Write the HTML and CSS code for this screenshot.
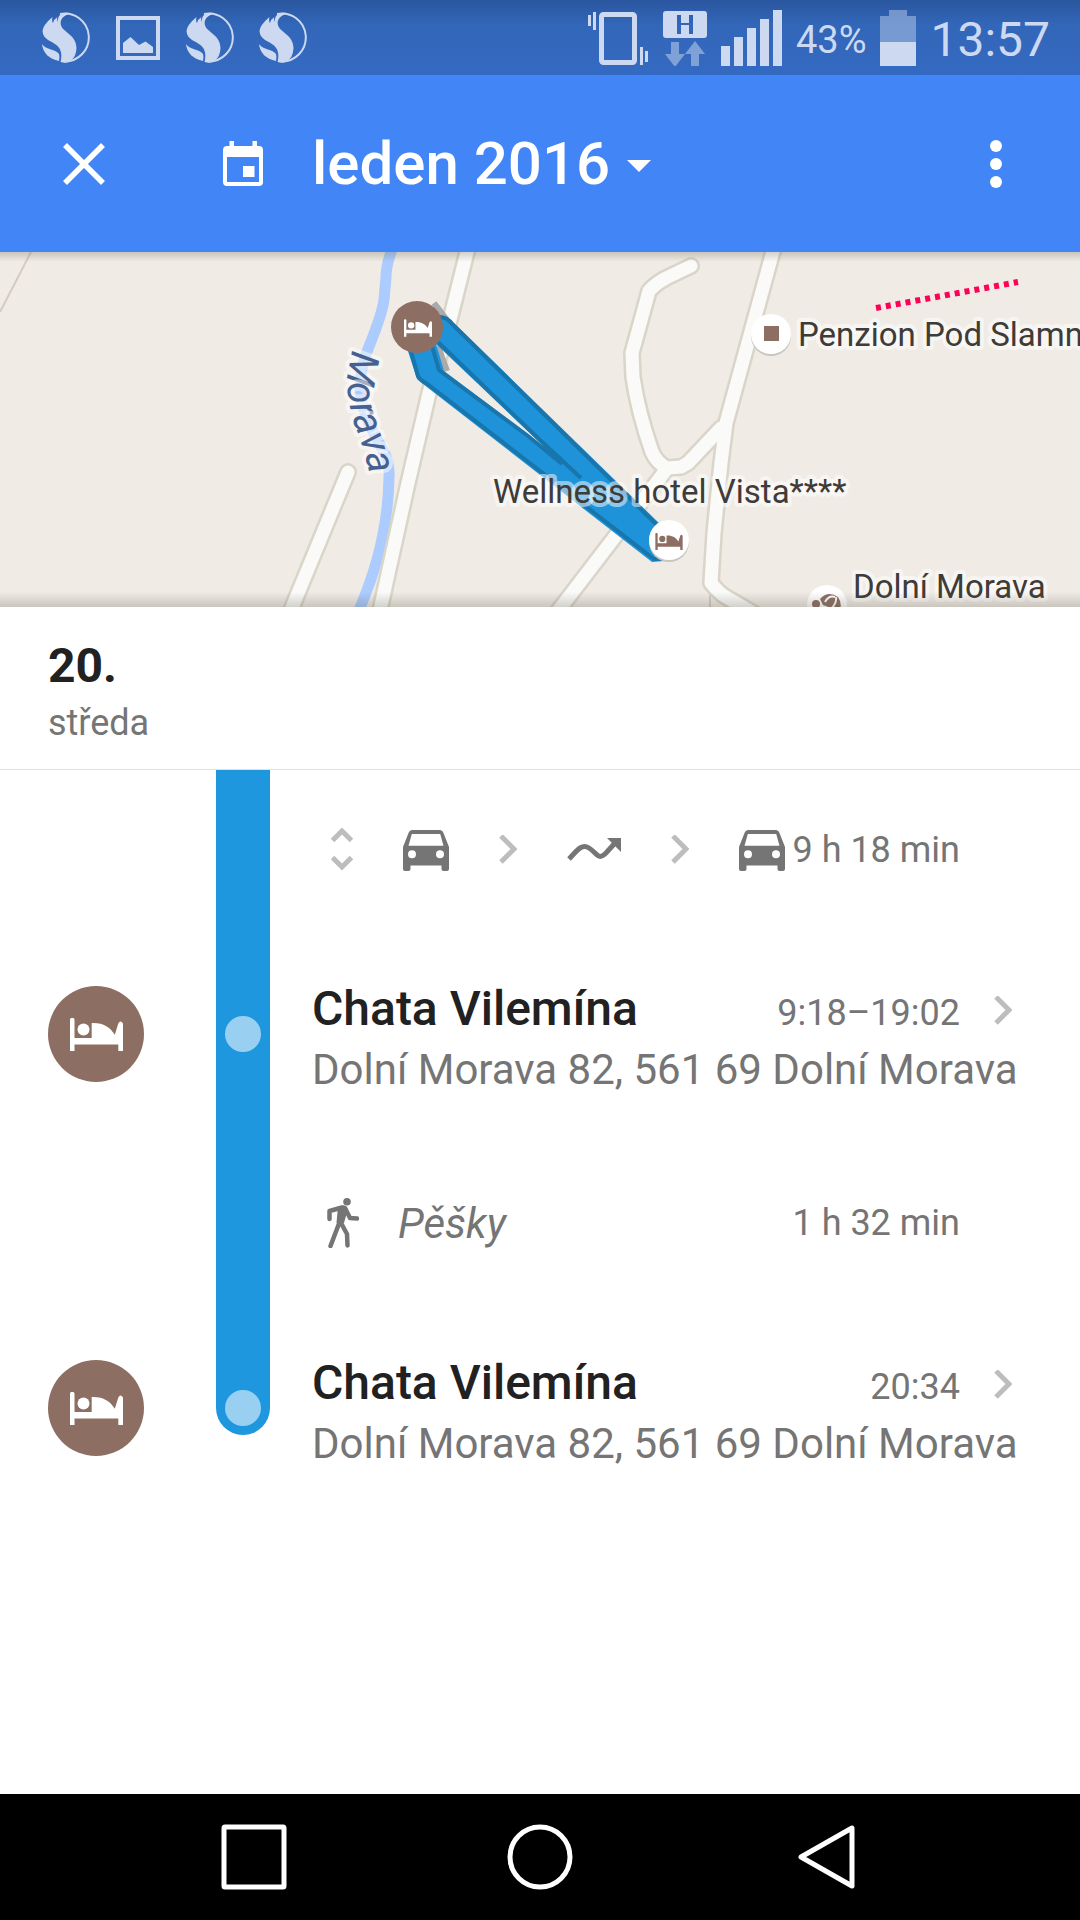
FILE: index.html
```html
<!DOCTYPE html>
<html lang="cs">
<head>
<meta charset="utf-8">
<meta name="viewport" content="width=device-width, initial-scale=1">
<title>leden 2016</title>
<link rel="stylesheet" href="styles.css">
</head>
<body>
<svg class="defs" aria-hidden="true">
  <symbol id="bed" viewBox="0 0 53 33">
    <path d="M0 2a2 2 0 0 1 4.500 0V20H21.700V5C33 4.500 40 9 44.800 16.700L48.300 5.500Q50.500 1.500 53 5.500V33H48.300V26.500H4.500V33H0z"/>
    <circle cx="13.500" cy="11.500" r="6"/>
  </symbol>
  <symbol id="car" viewBox="0 0 46 41">
    <path fill-rule="evenodd" d="M9 0H37Q39.500 0 40.300 2.500L46 17V39Q46 41 44 41H40.500Q38.500 41 38.500 39V35.500H7.500V39Q7.500 41 5.500 41H2Q0 41 0 39V17L5.700 2.500Q6.500 0 9 0zM8.800 4L5.500 15.800H40.500L37.200 4zM9 20.300a4 4 0 1 0 0 8a4 4 0 1 0 0-8zM37 20.300a4 4 0 1 0 0 8a4 4 0 1 0 0-8z"/>
  </symbol>
  <symbol id="chevron" viewBox="0 0 18 30">
    <path d="M2 1L15 14L2 27" fill="none" stroke="currentColor" stroke-width="5"/>
  </symbol>
  <symbol id="dragon" viewBox="0 0 50 51">
    <path d="M18 2A24 24 0 1 1 22 49.500" fill="none" stroke="currentColor" stroke-width="2"/>
    <path d="M27 1C23 0 19 1 17 4Q15.500 7 15.500 10Q14.500 7 15.500 5Q12 7 11 11Q9.500 9 10.500 5Q1 13 .5 19C1 28 10 29 15 33.500C20 38 20 44 18.500 50Q23 51.500 27 50C32 47 34 43 34.500 36C34 24 25 22 20 15.500C16.500 10 20 4 27 2z"/>
    <path d="M0 32C4 38 14 37 17 42Q18 45 17 49C7 47 1 41 0 32z"/>
  </symbol>
</svg>

<header class="status">
  <div class="status-group status-left">
    <svg width="50" height="51"><use href="#dragon"/></svg>
    <svg width="48" height="44" viewBox="-1 0 48 44"><path d="M2 2H42V42H2z" fill="none" stroke="currentColor" stroke-width="4"/><path d="M7 37V27L14.500 21L23 29L29.500 25.500L37 31V37z"/></svg>
    <svg width="50" height="51"><use href="#dragon"/></svg>
    <svg width="50" height="51"><use href="#dragon"/></svg>
  </div>
  <div class="status-group status-right">
    <svg width="61" height="56" viewBox="0 0 61 56"><rect x="13.500" y="4.500" width="33" height="48" rx="2" fill="none" stroke="currentColor" stroke-width="5"/><path d="M0 5h3v11H0zM5 2h3v18H5zM52 37h3v18h-3zM57 41h3v11h-3z"/></svg>
    <svg width="44" height="56" viewBox="0 0 44 56"><path fill-rule="evenodd" d="M3 1H41Q44 1 44 4V25Q44 28 41 28H3Q0 28 0 25V4Q0 1 3 1zM14 5V24H18V15H26V24H30V5H26V13H18V5z"/><path opacity=".5" d="M8 32h8v12h6L12 57L2 44h6zM32 31L42 44H36V56H28V44H22z"/></svg>
    <svg width="61" height="56" viewBox="0 0 61 56"><path d="M0 36h9v20H0zM13 27h9v29h-9zM26 18h9v38h-9zM39 9h9v47h-9zM52 0h9v56h-9z"/></svg>
    <span class="battery-text">43%</span>
    <svg width="36" height="56" viewBox="0 0 36 56"><path opacity=".45" d="M9 0H27V6H36V32H0V6H9z"/><path d="M0 32H36V56H0z"/></svg>
    <time class="clock">13:57</time>
  </div>
</header>

<nav class="appbar">
  <button class="icon-button" type="button" aria-label="Zavřít"><svg width="42" height="42" viewBox="0 0 42 42"><path d="M2 2L40 40M40 2L2 40" stroke="currentColor" stroke-width="5.500"/></svg></button>
  <button class="month" type="button">
    <svg class="calendar" width="40" height="45" viewBox="0 0 40 45"><path fill-rule="evenodd" d="M6.500 0H11V5H29.500V0H34V5H36Q40 5 40 9V41Q40 45 36 45H4Q0 45 0 41V9Q0 5 4 5H6.500zM4 16V41H36V16zM20 25H31.500V36H20z"/></svg>
    <span>leden 2016</span>
    <svg class="caret" width="24" height="12" viewBox="0 0 24 12"><path d="M0 0H24L12 12z"/></svg>
  </button>
  <button class="icon-button more" type="button" aria-label="Další možnosti"><svg width="12" height="48" viewBox="0 0 12 48"><circle cx="6" cy="6" r="6"/><circle cx="6" cy="24" r="6"/><circle cx="6" cy="42" r="6"/></svg></button>
</nav>

<section class="map" aria-label="Mapa">
  <svg class="map-canvas" viewBox="0 0 1080 355" preserveAspectRatio="xMidYMid slice">
    <defs>
      <path id="river-label" d="M353 98Q348 115 347 130Q348 152 355 174Q367 204 376 252"/>
      <g id="roads">
        <path d="M469 -8L450 68L429 141L408 231L379 363"/>
        <path d="M348 220L289 363"/>
        <path d="M691 14L666 26Q655 32 649 39L632 101L633 125Q638 160 652 200Q657 211 667 216L681 215L688 211L721 176"/>
        <path d="M666 218L555 363"/>
        <path d="M775 -8L726 171L721 211L714 281L711 331Q720 342 726 345L755 362"/>
      </g>
    </defs>
    <path class="path-thin" d="M31 0L0 60M710 340V355"/>
    <path class="river" d="M393 -5Q386 12 386 25L384 48Q382 62 370 92C357 122 358 145 366 163C374 190 391 200 389 225Q388 292 359 358"/>
    <use href="#roads" class="road-edge"/>
    <use href="#roads" class="road"/>
    <path class="trace" d="M434 51L447 68M438 94L447 119"/>
    <path class="route" d="M405 90L417 127L423 132L652 310L676 308L664 285L444 119L434 85z"/>
    <path class="route" d="M430 66H443L451 68L660 272L669 290L655 300L438 94L425 85z"/>
    <path class="route-edge" d="M410 96L418 124Q420 128 426 131L654 307L676 306M432 94L439 118L528 184L562 212M437 65Q447 64 452 72L660 276M438 90L540 188L581 226"/>
    <path class="border-line" d="M876 56L1018 30"/>
    <circle class="shadow" cx="771" cy="84" r="20"/><circle class="poi" cx="771" cy="82" r="20"/><path class="brown" d="M764 74h15v15h-15z"/>
    <text class="place-label" x="798" y="94">Penzion Pod Slamn</text>
    <text class="place-label" x="493" y="251">Wellness hotel Vista****</text>
    <circle class="shadow" cx="669" cy="290" r="20"/><circle class="poi" cx="669" cy="288" r="20"/><use class="brown" href="#bed" x="655" y="281" width="28" height="17"/>
    <circle class="poi" cx="827" cy="353" r="20"/>
    <circle class="brown" cx="816" cy="352" r="4"/><path class="brown" d="M820 347Q828 338 838 345Q843 352 839 361L834 357L823 353z"/><path class="poi-line" d="M825 350Q829 343 835 345M832 356Q837 350 836 345"/>
    <text class="place-label" x="853" y="346">Dolní Morava</text>
    <text class="river-text"><textPath href="#river-label">Morava</textPath></text>
    <circle class="brown" cx="417" cy="75" r="26"/><use class="bed-white" href="#bed" x="404" y="67" width="28" height="18"/>
  </svg>
</section>

<main class="day">
  <header class="day-header">
    <h1>20.</h1>
    <p>středa</p>
  </header>
  <ol class="timeline">
    <li class="row leg leg-continued">
      <span class="rail"></span>
      <div class="leg-body">
        <div class="modes">
          <button class="expand" type="button" aria-label="Rozbalit"><svg width="22" height="44" viewBox="0 0 22 44"><path d="M1.500 12.500L11 3L20.500 12.500M1.500 29.500L11 39L20.500 29.500" fill="none" stroke="currentColor" stroke-width="5"/></svg></button>
          <svg width="46" height="41"><use href="#car"/></svg>
          <svg class="muted" width="18" height="30"><use href="#chevron"/></svg>
          <svg width="54" height="24" viewBox="0 1 54 24"><path d="M2 22C9 15 14 6 22 11S31 24 39 16L48 6" fill="none" stroke="currentColor" stroke-width="5"/><path d="M39 0H54V15z"/></svg>
          <svg class="muted" width="18" height="30"><use href="#chevron"/></svg>
          <svg width="46" height="41"><use href="#car"/></svg>
        </div>
        <span class="time">9 h 18 min</span>
      </div>
    </li>
    <li class="row place">
      <span class="badge"><svg width="53" height="33"><use href="#bed"/></svg></span>
      <span class="rail"><span class="dot"></span></span>
      <a class="place-body" href="#chata-1">
        <span class="place-line"><strong>Chata Vilemína</strong><span class="time">9:18–19:02</span><svg class="muted go" width="18" height="30"><use href="#chevron"/></svg></span>
        <span class="address">Dolní Morava 82, 561 69 Dolní Morava</span>
      </a>
    </li>
    <li class="row leg">
      <span class="rail"></span>
      <div class="leg-body">
        <div class="walk">
          <svg width="32" height="50" viewBox="0 0 32 50"><circle cx="20" cy="3.800" r="3.800"/><path d="M11 8.500L17 7.500L21 11L17 25L9.500 25z"/><path d="M2.500 21V13L15 9.500L18 10L23 20L30 20.500M13 23L3.500 48M13.500 24L20 36L20.500 47.500" fill="none" stroke="currentColor" stroke-width="4.500" stroke-linecap="round" stroke-linejoin="round"/></svg>
          <em>Pěšky</em>
        </div>
        <span class="time">1 h 32 min</span>
      </div>
    </li>
    <li class="row place">
      <span class="badge"><svg width="53" height="33"><use href="#bed"/></svg></span>
      <span class="rail rail-end"><span class="dot"></span></span>
      <a class="place-body" href="#chata-2">
        <span class="place-line"><strong>Chata Vilemína</strong><span class="time">20:34</span><svg class="muted go" width="18" height="30"><use href="#chevron"/></svg></span>
        <span class="address">Dolní Morava 82, 561 69 Dolní Morava</span>
      </a>
    </li>
  </ol>
</main>

<footer class="navbar">
  <button type="button" aria-label="Přehled"><svg width="66" height="66" viewBox="0 0 66 66"><rect x="3" y="3" width="60" height="60" rx="1"/></svg></button>
  <button type="button" aria-label="Domů"><svg width="66" height="66" viewBox="0 0 66 66"><circle cx="33" cy="33" r="30"/></svg></button>
  <button type="button" aria-label="Zpět"><svg width="58" height="66" viewBox="0 0 58 66"><path d="M55 4V62L4 33z"/></svg></button>
</footer>
</body>
</html>
```

FILE: styles.css
```css
* {
  box-sizing: border-box;
}

body {
  margin: 0;
  min-height: 100vh;
  display: flex;
  flex-direction: column;
  background: #fff;
  color: #212121;
  font-family: Roboto, "Noto Sans", sans-serif;
}

svg {
  display: block;
  flex: none;
  fill: currentColor;
}

button {
  display: flex;
  align-items: center;
  justify-content: center;
  padding: 0;
  border: 0;
  background: none;
  color: inherit;
  font: inherit;
}

.defs {
  position: absolute;
  width: 0;
  height: 0;
}

/* Status bar */
.status {
  display: flex;
  justify-content: space-between;
  height: 75px;
  padding: 0 30px 0 42px;
  background: linear-gradient(#2a569f, #3266b8 24px, #346ac2);
  color: #ccd9f1;
}

.status-group {
  display: flex;
  align-items: center;
}

.status-left {
  gap: 23px;
}

.status-right {
  gap: 14px;
}

.battery-text {
  padding-top: 4px;
  font-size: 38px;
}

.clock {
  padding-top: 4px;
  font-size: 48px;
}

/* App bar */
.appbar {
  display: flex;
  align-items: center;
  height: 177px;
  background: #4285f6;
  color: #fff;
}

.icon-button {
  width: 168px;
  height: 168px;
}

.month {
  padding-left: 55px;
  font-size: 60px;
  font-weight: 500;
}

.calendar {
  margin-right: 49px;
}

.caret {
  margin: 4px 0 0 17px;
}

.more {
  margin-left: auto;
}

/* Map */
.map {
  position: relative;
  height: 355px;
  background: #f0ebe5;
}

.map::after {
  content: "";
  position: absolute;
  inset: 0;
  background:
    linear-gradient(rgba(90, 85, 60, .25), transparent 10px),
    linear-gradient(to top, rgba(90, 85, 70, .25), transparent 15px);
}

.map-canvas {
  width: 100%;
  height: 100%;
}

.path-thin {
  fill: none;
  stroke: #d2ccc5;
  stroke-width: 2;
}

.river {
  fill: none;
  stroke: #accbff;
  stroke-width: 11;
}

.road-edge,
.road {
  fill: none;
  stroke: #d9d5c9;
  stroke-width: 18;
  stroke-linecap: round;
  stroke-linejoin: round;
}

.road {
  stroke: #fafaf8;
  stroke-width: 13;
}

.trace {
  fill: none;
  stroke: #aaa;
  stroke-width: 6;
}

.route {
  fill: #1e93d9;
}

.route-edge {
  fill: none;
  stroke: #1976ad;
  stroke-width: 4;
}

.border-line {
  stroke: #ff0058;
  stroke-width: 6;
  stroke-dasharray: 5 5;
}

.poi {
  fill: #fff;
}

.poi-line {
  fill: none;
  stroke: #fff;
  stroke-width: 2;
}

.shadow {
  fill: #c9c5bf;
}

.brown {
  fill: #8d6e63;
}

.bed-white {
  fill: #fff;
}

.place-label,
.river-text {
  fill: #3e3b38;
  stroke: rgba(255, 255, 255, .5);
  stroke-width: 8;
  stroke-linejoin: round;
  paint-order: stroke;
  font-size: 33px;
}

.river-text {
  fill: #466190;
  font-size: 40px;
  font-style: italic;
}

/* Day */
.day {
  flex: 1;
}

.day-header {
  padding: 30px 48px 18px;
  border-bottom: 1px solid #e0e0e0;
}

.day-header h1 {
  margin: 0;
  font-size: 48px;
  font-weight: 700;
  line-height: 58px;
}

.day-header p {
  margin: 0;
  color: #757575;
  font-size: 36px;
  line-height: 56px;
}

.timeline {
  margin: 0;
  padding: 0;
  list-style: none;
}

.row {
  display: grid;
  grid-template-columns: 216px 54px 1fr;
}

.place {
  min-height: 208px;
}

.leg {
  min-height: 166px;
}

.leg-continued {
  min-height: 160px;
}

.badge {
  grid-column: 1;
  align-self: center;
  display: flex;
  align-items: center;
  justify-content: center;
  width: 96px;
  height: 96px;
  margin-left: 48px;
  border-radius: 50%;
  background: #8d6e63;
  color: #fff;
}

.rail {
  grid-column: 2;
  display: flex;
  align-items: center;
  justify-content: center;
  background: #1f97df;
}

.rail-end {
  align-self: start;
  align-items: flex-end;
  height: calc(50% + 27px);
  padding-bottom: 9px;
  border-radius: 0 0 27px 27px;
}

.dot {
  width: 36px;
  height: 36px;
  border-radius: 50%;
  background: #99d0f2;
}

.leg-body {
  display: flex;
  align-items: center;
  justify-content: space-between;
  padding: 4px 120px 0 57px;
  color: #757575;
}

.leg-continued .leg-body {
  padding-top: 0;
}

.modes {
  display: flex;
  align-items: center;
  gap: 50px;
  padding-left: 4px;
}

.expand,
.muted {
  color: #bdbdbd;
}

.walk {
  display: flex;
  align-items: center;
  gap: 39px;
  font-size: 42px;
}

.time {
  color: #757575;
  font-size: 36px;
  white-space: nowrap;
}

.place-body {
  display: flex;
  flex-direction: column;
  justify-content: center;
  padding: 8px 60px 0 42px;
  color: inherit;
  text-decoration: none;
}

.place-line {
  display: flex;
  align-items: baseline;
  line-height: 60px;
}

.place-line strong {
  flex: 1;
  font-size: 48px;
  font-weight: 500;
}

.go {
  align-self: center;
  margin: 0 8px 0 34px;
}

.address {
  color: #757575;
  font-size: 42px;
  line-height: 54px;
  white-space: nowrap;
}

/* System navigation */
.navbar {
  display: grid;
  grid-template-columns: repeat(3, 1fr);
  height: 126px;
  padding: 0 111px;
  background: #000;
  color: #fff;
}

.navbar svg {
  fill: none;
  stroke: currentColor;
  stroke-width: 5;
  stroke-linejoin: round;
}
```
